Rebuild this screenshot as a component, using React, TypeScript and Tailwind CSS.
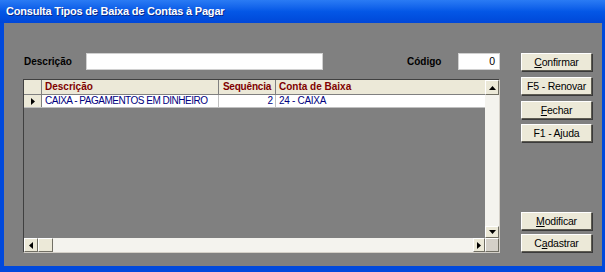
import React from 'react';

const font = { fontFamily: '"Liberation Sans", Arial, sans-serif' };

function Arrow({ dir }: { dir: 'up' | 'down' | 'left' | 'right' }) {
  const pts = {
    up: '0,4 3.5,0 7,4',
    down: '0,0 3.5,4 7,0',
    left: '4,0 0,3.5 4,7',
    right: '0,0 4,3.5 0,7',
  }[dir];
  const vertical = dir === 'up' || dir === 'down';
  return (
    <svg width={vertical ? 7 : 4} height={vertical ? 4 : 7} viewBox={vertical ? '0 0 7 4' : '0 0 4 7'}>
      <polygon points={pts} fill="#000" />
    </svg>
  );
}

function ScrollBtn({ children, className = '' }: { children?: React.ReactNode; className?: string }) {
  return (
    <div
      className={`flex items-center justify-center bg-[#ece9d8] border border-t-white border-l-white border-b-[#716f64] border-r-[#716f64] ${className}`}
    >
      {children}
    </div>
  );
}

function Button({ label, u }: { label: string; u?: number }) {
  return (
    <button className="w-[71px] h-[18px] bg-[#ece9d8] border border-t-white border-l-white border-b-[#5e5c52] border-r-[#5e5c52] shadow-[1px_1px_0_#3a3a3a] text-[10.5px] tracking-[-0.2px] text-black leading-none flex items-center justify-center">
      {u === undefined ? (
        label
      ) : (
        <>
          {label.slice(0, u)}
          <span className="underline">{label[u]}</span>
          {label.slice(u + 1)}
        </>
      )}
    </button>
  );
}

export default function App() {
  return (
    <div className="w-[605px] h-[272px] flex flex-col bg-[#0049dc] overflow-hidden" style={font}>
      {/* title bar */}
      <div className="h-[23px] shrink-0 flex items-center px-[6px] bg-gradient-to-b from-[#2a7bf4] via-[#0457e6] to-[#0047d8]">
        <span className="text-white font-bold text-[11px] tracking-[-0.2px] [text-shadow:1px_1px_0_#0a2a8a]">
          Consulta Tipos de Baixa de Contas à Pagar
        </span>
      </div>

      {/* client area */}
      <div className="flex-1 ml-[4px] mr-[3px] mb-[6px] bg-[#808080] flex pt-[30px] pl-[19px]">
        <div className="w-[477px] flex flex-col">
          {/* filter row */}
          <div className="h-[17px] flex items-center">
            <span className="ml-[1px] w-[62px] text-[10px] font-bold text-black">Descrição</span>
            <div className="w-[237px] h-[17px] bg-white border border-[#d0d0d0]" />
            <span className="ml-[84px] w-[51px] text-[10px] font-bold text-black">Código</span>
            <div className="w-[42px] h-[17px] bg-white border border-[#d0d0d0] flex items-center justify-end pr-[4px] text-[10.5px] text-black">
              0
            </div>
          </div>

          {/* grid */}
          <div className="mt-[9px] h-[174px] flex flex-col border border-t-[#404040] border-l-[#404040] border-b-[#d4d0c8] border-r-[#d4d0c8] bg-[#808080]">
            <div className="flex-1 flex min-h-0">
              <div className="flex-1 flex flex-col text-[10px] leading-none">
                <div className="h-[15px] flex bg-[#ece9d8] border-b border-[#808080]">
                  <div className="w-[18px] border-r border-[#808080]" />
                  <div className="w-[177px] border-r border-[#808080] px-[3px] flex items-center font-bold text-[#800000]">
                    Descrição
                  </div>
                  <div className="w-[57px] border-r border-[#808080] px-[1px] flex items-center justify-center font-bold text-[#800000] whitespace-nowrap overflow-hidden tracking-[-0.2px]">
                    Sequência
                  </div>
                  <div className="flex-1 px-[3px] flex items-center font-bold text-[#800000]">Conta de Baixa</div>
                </div>
                <div className="h-[13px] flex bg-white border-b border-[#c0c0c0]">
                  <div className="w-[18px] bg-[#ece9d8] border-r border-[#808080] flex items-center justify-center">
                    <Arrow dir="right" />
                  </div>
                  <div className="w-[177px] border-r border-[#c0c0c0] px-[3px] flex items-center text-[#000080] whitespace-nowrap overflow-hidden tracking-[-0.5px]">
                    CAIXA - PAGAMENTOS EM DINHEIRO
                  </div>
                  <div className="w-[57px] border-r border-[#c0c0c0] px-[2px] flex items-center justify-end text-[#000080]">
                    2
                  </div>
                  <div className="flex-1 px-[3px] flex items-center text-[#000080] tracking-[-0.3px]">24 - CAIXA</div>
                </div>
              </div>
              {/* vertical scrollbar */}
              <div className="w-[14px] flex flex-col bg-[#f4f3ee]">
                <ScrollBtn className="h-[15px]">
                  <Arrow dir="up" />
                </ScrollBtn>
                <div className="flex-1" />
                <ScrollBtn className="h-[12px]">
                  <Arrow dir="down" />
                </ScrollBtn>
              </div>
            </div>
            {/* horizontal scrollbar */}
            <div className="h-[14px] flex">
              <div className="flex-1 flex bg-[#f4f3ee]">
                <ScrollBtn className="w-[14px]">
                  <Arrow dir="left" />
                </ScrollBtn>
                <ScrollBtn className="w-[15px]" />
                <div className="flex-1" />
                <ScrollBtn className="w-[12px]">
                  <Arrow dir="right" />
                </ScrollBtn>
              </div>
              <div className="w-[14px] bg-[#d4d0c8] border border-t-white border-l-white border-b-[#716f64] border-r-[#716f64]" />
            </div>
          </div>
        </div>

        {/* buttons */}
        <div className="ml-[21px] flex flex-col">
          <Button label="Confirmar" u={0} />
          <div className="h-[6px]" />
          <Button label="F5 - Renovar" />
          <div className="h-[6px]" />
          <Button label="Fechar" u={0} />
          <div className="h-[5px]" />
          <Button label="F1 - Ajuda" />
          <div className="h-[70px]" />
          <Button label="Modificar" u={0} />
          <div className="h-[4px]" />
          <Button label="Cadastrar" u={1} />
        </div>
      </div>
    </div>
  );
}
